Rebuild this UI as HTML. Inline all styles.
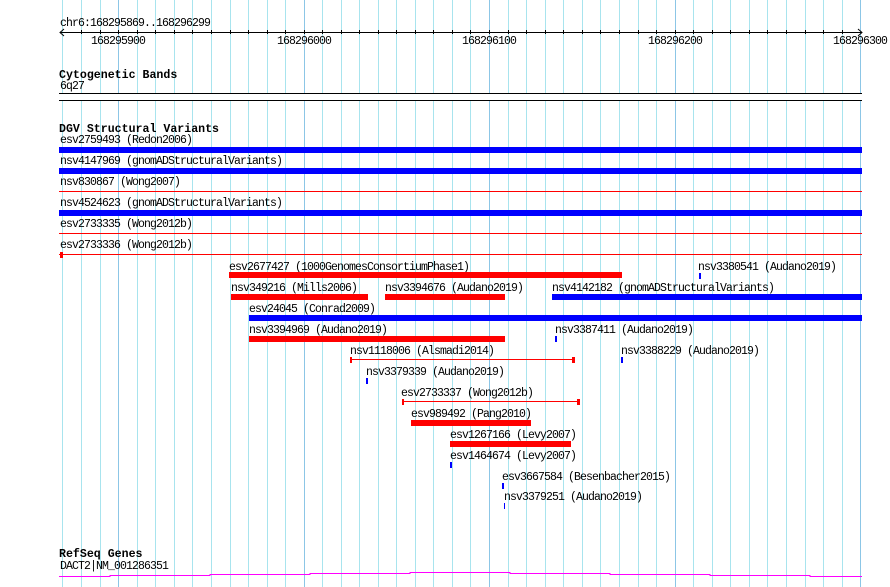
<!DOCTYPE html>
<html><head><meta charset="utf-8"><style>
body{margin:0;width:890px;height:587px;background:#fff;position:relative;overflow:hidden;font-family:"Liberation Mono","DejaVu Sans Mono",monospace;font-size:11.5px;letter-spacing:-0.9px;line-height:10px;color:#000}
div{position:absolute}
.g{top:0;height:587px;width:1px;background:#a8e4ee}
.d{background:#8cc6e6}
.t{white-space:nowrap;margin-top:2px}
.b{font-weight:bold;font-size:11.6px;letter-spacing:0;line-height:12px}
.r{background:#ff0000}
.u{background:#0000ff}
.k{background:#000}
</style></head><body>
<div class="g" style="left:62px"></div><div class="g" style="left:81px"></div><div class="g" style="left:100px"></div><div class="g d" style="left:118px"></div><div class="g" style="left:137px"></div><div class="g" style="left:155px"></div><div class="g" style="left:174px"></div><div class="g" style="left:192px"></div><div class="g" style="left:211px"></div><div class="g" style="left:230px"></div><div class="g" style="left:248px"></div><div class="g" style="left:267px"></div><div class="g" style="left:285px"></div><div class="g d" style="left:304px"></div><div class="g" style="left:322px"></div><div class="g" style="left:341px"></div><div class="g" style="left:359px"></div><div class="g" style="left:378px"></div><div class="g" style="left:396px"></div><div class="g" style="left:415px"></div><div class="g" style="left:433px"></div><div class="g" style="left:452px"></div><div class="g" style="left:470px"></div><div class="g d" style="left:489px"></div><div class="g" style="left:508px"></div><div class="g" style="left:526px"></div><div class="g" style="left:545px"></div><div class="g" style="left:563px"></div><div class="g" style="left:582px"></div><div class="g" style="left:600px"></div><div class="g" style="left:619px"></div><div class="g" style="left:638px"></div><div class="g" style="left:656px"></div><div class="g d" style="left:675px"></div><div class="g" style="left:693px"></div><div class="g" style="left:712px"></div><div class="g" style="left:730px"></div><div class="g" style="left:749px"></div><div class="g" style="left:767px"></div><div class="g" style="left:786px"></div><div class="g" style="left:805px"></div><div class="g" style="left:823px"></div><div class="g" style="left:842px"></div><div class="g d" style="left:860px"></div>

<!-- ruler -->
<div class="t" style="left:60px;top:17px">chr6:168295869..168296299</div>
<div class="k" style="left:60px;top:32px;width:802px;height:1px"></div>
<svg style="position:absolute;left:0;top:0" width="890" height="50">
<path d="M64 29L60 32.5L64 36M858 29L862 32.5L858 36" stroke="#000" fill="none" stroke-width="1"/>
<g stroke="#000" stroke-width="1">
<path d="M81.5 30v4M100.5 30v4M118.5 30v4M137.5 30v4M155.5 30v4M174.5 30v4M192.5 30v4M211.5 30v4M230.5 30v4M248.5 30v4M267.5 30v4M285.5 30v4M304.5 30v4M322.5 30v4M341.5 30v4M359.5 30v4M378.5 30v4M396.5 30v4M415.5 30v4M433.5 30v4M452.5 30v4M470.5 30v4M489.5 30v4M508.5 30v4M526.5 30v4M545.5 30v4M563.5 30v4M582.5 30v4M600.5 30v4M619.5 30v4M638.5 30v4M656.5 30v4M675.5 30v4M693.5 30v4M712.5 30v4M730.5 30v4M749.5 30v4M767.5 30v4M786.5 30v4M805.5 30v4M823.5 30v4M842.5 30v4"/>
</g></svg>
<div class="t" style="left:91px;top:35px">168295900</div>
<div class="t" style="left:277px;top:35px">168296000</div>
<div class="t" style="left:462px;top:35px">168296100</div>
<div class="t" style="left:648px;top:35px">168296200</div>
<div class="t" style="left:833px;top:35px">168296300</div>

<!-- cyto -->
<div class="t b" style="left:59px;top:68px">Cytogenetic Bands</div>
<div class="t" style="left:60px;top:80px">6q27</div>
<div style="left:59px;top:94px;width:803px;height:6px;background:#fff"></div>
<div class="k" style="left:59px;top:93px;width:803px;height:1px"></div>
<div class="k" style="left:59px;top:100px;width:803px;height:1px"></div>

<!-- DGV -->
<div class="t b" style="left:59px;top:122px">DGV Structural Variants</div>
<div class="t" style="left:60px;top:134px">esv2759493 (Redon2006)</div>
<div class="u" style="left:59px;top:147px;width:803px;height:6px"></div>
<div class="t" style="left:60px;top:155px">nsv4147969 (gnomADStructuralVariants)</div>
<div class="u" style="left:59px;top:168px;width:803px;height:6px"></div>
<div class="t" style="left:60px;top:176px">nsv830867 (Wong2007)</div>
<div class="r" style="left:59px;top:191px;width:803px;height:1px"></div>
<div class="t" style="left:60px;top:197px">nsv4524623 (gnomADStructuralVariants)</div>
<div class="u" style="left:59px;top:210px;width:803px;height:6px"></div>
<div class="t" style="left:60px;top:218px">esv2733335 (Wong2012b)</div>
<div class="r" style="left:59px;top:233px;width:803px;height:1px"></div>
<div class="t" style="left:60px;top:239px">esv2733336 (Wong2012b)</div>
<div class="r" style="left:59px;top:254px;width:803px;height:1px"></div>
<div class="r" style="left:60px;top:252px;width:3px;height:6px"></div>

<div class="t" style="left:229px;top:261px">esv2677427 (1000GenomesConsortiumPhase1)</div>
<div class="r" style="left:229px;top:272px;width:393px;height:6px"></div>
<div class="t" style="left:698px;top:261px">nsv3380541 (Audano2019)</div>
<div class="u" style="left:699px;top:273px;width:2px;height:6px"></div>

<div class="t" style="left:231px;top:282px">nsv349216 (Mills2006)</div>
<div class="r" style="left:231px;top:294px;width:137px;height:6px"></div>
<div class="t" style="left:385px;top:282px">nsv3394676 (Audano2019)</div>
<div class="r" style="left:385px;top:294px;width:120px;height:6px"></div>
<div class="t" style="left:552px;top:282px">nsv4142182 (gnomADStructuralVariants)</div>
<div class="u" style="left:552px;top:294px;width:310px;height:6px"></div>

<div class="t" style="left:249px;top:303px">esv24045 (Conrad2009)</div>
<div class="u" style="left:249px;top:315px;width:613px;height:6px"></div>

<div class="t" style="left:249px;top:324px">nsv3394969 (Audano2019)</div>
<div class="r" style="left:249px;top:336px;width:256px;height:6px"></div>
<div class="t" style="left:555px;top:324px">nsv3387411 (Audano2019)</div>
<div class="u" style="left:555px;top:336px;width:2px;height:6px"></div>

<div class="t" style="left:350px;top:345px">nsv1118006 (Alsmadi2014)</div>
<div class="r" style="left:351px;top:359px;width:222px;height:1px"></div>
<div class="r" style="left:350px;top:357px;width:2px;height:6px"></div>
<div class="r" style="left:572px;top:357px;width:3px;height:6px"></div>
<div class="t" style="left:621px;top:345px">nsv3388229 (Audano2019)</div>
<div class="u" style="left:621px;top:357px;width:2px;height:6px"></div>

<div class="t" style="left:366px;top:366px">nsv3379339 (Audano2019)</div>
<div class="u" style="left:366px;top:378px;width:2px;height:6px"></div>

<div class="t" style="left:401px;top:387px">esv2733337 (Wong2012b)</div>
<div class="r" style="left:402px;top:401px;width:176px;height:1px"></div>
<div class="r" style="left:402px;top:399px;width:2px;height:6px"></div>
<div class="r" style="left:577px;top:399px;width:3px;height:6px"></div>

<div class="t" style="left:411px;top:408px">esv989492 (Pang2010)</div>
<div class="r" style="left:411px;top:420px;width:120px;height:6px"></div>

<div class="t" style="left:450px;top:429px">esv1267166 (Levy2007)</div>
<div class="r" style="left:450px;top:441px;width:121px;height:6px"></div>

<div class="t" style="left:450px;top:450px">esv1464674 (Levy2007)</div>
<div class="u" style="left:450px;top:462px;width:2px;height:6px"></div>

<div class="t" style="left:502px;top:471px">esv3667584 (Besenbacher2015)</div>
<div class="u" style="left:502px;top:483px;width:2px;height:6px"></div>

<div class="t" style="left:504px;top:491px">nsv3379251 (Audano2019)</div>
<div class="u" style="left:504px;top:503px;width:1px;height:6px"></div>

<!-- RefSeq -->
<div class="t b" style="left:59px;top:547px">RefSeq Genes</div>
<div class="t" style="left:60px;top:560px">DACT2|NM_001286351</div>
<svg style="position:absolute;left:0;top:560px" width="890" height="27">
<path d="M59 16.5H110V15.5H210V14.5H310V13.5H410V12.5H510V13.5H610V14.5H710V15.5H810V16.5H862" stroke="#ff00ff" fill="none" stroke-width="1"/>
</svg>
</body></html>
